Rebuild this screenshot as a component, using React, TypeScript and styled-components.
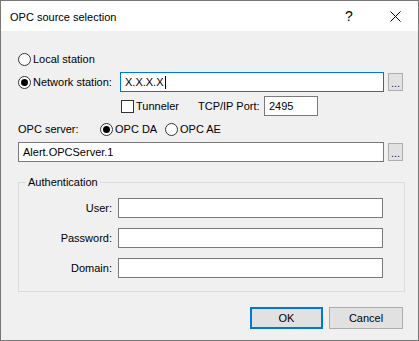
import React from 'react';
import styled, { createGlobalStyle } from 'styled-components';

const Global = createGlobalStyle`
  html, body { margin: 0; padding: 0; background: #fff; }
  body { font-family: "Liberation Sans", Arial, sans-serif; font-size: 11px; color: #000; }
  * { box-sizing: border-box; }
`;

const Window = styled.div`
  width: 419px;
  height: 341px;
  border: 1px solid #777;
  display: flex;
  flex-direction: column;
  background: #f0f0f0;
`;

const TitleBar = styled.div`
  height: 30px;
  flex-shrink: 0;
  background: #fff;
  display: flex;
  align-items: center;
`;

const Title = styled.div`
  flex: 1;
  padding-left: 9px;
  padding-top: 1px;
`;

const CaptionButton = styled.div`
  width: 46px;
  height: 30px;
  display: flex;
  align-items: center;
  justify-content: center;
  font-size: 14px;
`;

const Body = styled.div`
  flex: 1;
  display: flex;
  flex-direction: column;
  padding: 0 13px 0 17px;
`;

const Row = styled.div<{ $h: number; $mt: number; $pl?: number }>`
  display: flex;
  align-items: center;
  height: ${p => p.$h}px;
  margin-top: ${p => p.$mt}px;
  padding-left: ${p => p.$pl ?? 0}px;
`;

const Choice = styled.label<{ $w?: number }>`
  display: flex;
  align-items: center;
  gap: 2px;
  flex-shrink: 0;
  width: ${p => (p.$w ? `${p.$w}px` : 'auto')};
  white-space: nowrap;
`;

const RadioCircle = styled.span<{ $checked?: boolean }>`
  width: 13px;
  height: 13px;
  border-radius: 50%;
  border: 1px solid #333;
  background: #fff;
  display: flex;
  align-items: center;
  justify-content: center;
  &::after {
    content: '';
    width: 7px;
    height: 7px;
    border-radius: 50%;
    background: #000;
    display: ${p => (p.$checked ? 'block' : 'none')};
  }
`;

const CheckBox = styled.span`
  width: 13px;
  height: 13px;
  border: 1px solid #333;
  background: #fff;
`;

const Label = styled.span<{ $w: number; $align?: string }>`
  width: ${p => p.$w}px;
  flex-shrink: 0;
  text-align: ${p => p.$align ?? 'left'};
  white-space: nowrap;
`;

const Field = styled.div<{ $w: number; $focused?: boolean }>`
  width: ${p => p.$w}px;
  height: 20px;
  flex-shrink: 0;
  border: 1px solid ${p => (p.$focused ? '#0078d7' : '#7a7a7a')};
  background: #fff;
  padding-left: 4px;
  display: flex;
  align-items: center;
  white-space: nowrap;
`;

const Caret = styled.span`
  width: 1px;
  height: 13px;
  background: #000;
  margin-left: 1px;
`;

const BrowseButton = styled.div`
  width: 15px;
  height: 18px;
  margin-left: 4px;
  border: 1px solid #adadad;
  background: #e1e1e1;
  color: #1b1464;
  display: flex;
  align-items: center;
  justify-content: center;
  line-height: 14px;
  padding-top: 2px;
  letter-spacing: 0;
`;

const Group = styled.div`
  position: relative;
  margin-top: 20px;
  width: 387px;
  height: 110px;
  border: 1px solid #dcdcdc;
  display: flex;
  flex-direction: column;
  gap: 10px;
  padding-top: 15px;
`;

const Legend = styled.span`
  position: absolute;
  top: -7px;
  left: 7px;
  padding: 0 2px;
  line-height: 13px;
  background: #f0f0f0;
`;

const GroupRow = styled.div`
  display: flex;
  align-items: center;
  height: 20px;
`;

const ButtonRow = styled.div`
  display: flex;
  justify-content: flex-end;
  gap: 6px;
  margin-top: 15px;
  padding-right: 2px;
`;

const DialogButton = styled.div<{ $w: number; $default?: boolean }>`
  width: ${p => p.$w}px;
  height: 22px;
  border: ${p => (p.$default ? '2px solid #0078d7' : '1px solid #adadad')};
  background: #e1e1e1;
  display: flex;
  align-items: center;
  justify-content: center;
`;

const CloseIcon = () => (
  <svg width="11" height="11" viewBox="0 0 11 11">
    <path d="M0.5 0.5 L10.5 10.5 M10.5 0.5 L0.5 10.5" stroke="#000" strokeWidth="1" fill="none" />
  </svg>
);

export default function App() {
  return (
    <>
      <Global />
      <Window>
        <TitleBar>
          <Title>OPC source selection</Title>
          <CaptionButton>?</CaptionButton>
          <CaptionButton>
            <CloseIcon />
          </CaptionButton>
        </TitleBar>
        <Body>
          <Row $h={16} $mt={20}>
            <Choice>
              <RadioCircle />
              <span>Local station</span>
            </Choice>
          </Row>
          <Row $h={20} $mt={5}>
            <Choice $w={102}>
              <RadioCircle $checked />
              <span>Network station:</span>
            </Choice>
            <Field $w={264} $focused>
              X.X.X.X
              <Caret />
            </Field>
            <BrowseButton>...</BrowseButton>
          </Row>
          <Row $h={20} $mt={4} $pl={103}>
            <Choice $w={77}>
              <CheckBox />
              <span>Tunneler</span>
            </Choice>
            <Label $w={66}>TCP/IP Port:</Label>
            <Field $w={54}>2495</Field>
          </Row>
          <Row $h={16} $mt={5}>
            <Label $w={82}>OPC server:</Label>
            <Choice $w={65}>
              <RadioCircle $checked />
              <span>OPC DA</span>
            </Choice>
            <Choice>
              <RadioCircle />
              <span>OPC AE</span>
            </Choice>
          </Row>
          <Row $h={20} $mt={5}>
            <Field $w={366}>Alert.OPCServer.1</Field>
            <BrowseButton>...</BrowseButton>
          </Row>
          <Group>
            <Legend>Authentication</Legend>
            <GroupRow>
              <Label $w={93} $align="right">User:</Label>
              <Field $w={265} style={{ marginLeft: 6 }} />
            </GroupRow>
            <GroupRow>
              <Label $w={93} $align="right">Password:</Label>
              <Field $w={265} style={{ marginLeft: 6 }} />
            </GroupRow>
            <GroupRow>
              <Label $w={93} $align="right">Domain:</Label>
              <Field $w={265} style={{ marginLeft: 6 }} />
            </GroupRow>
          </Group>
          <ButtonRow>
            <DialogButton $w={73} $default>OK</DialogButton>
            <DialogButton $w={74}>Cancel</DialogButton>
          </ButtonRow>
        </Body>
      </Window>
    </>
  );
}
